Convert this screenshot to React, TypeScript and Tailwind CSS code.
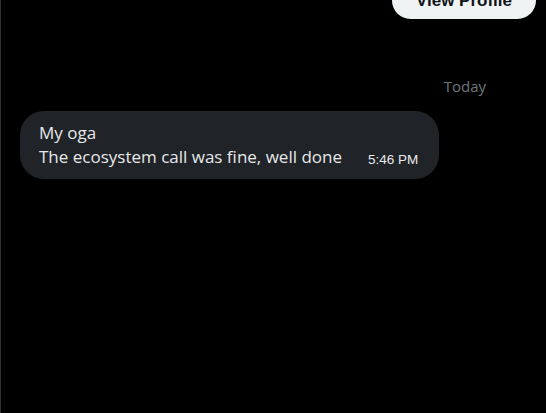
import React from 'react';

const App: React.FC = () => {
  return (
    <div className="h-[413px] w-[546px] overflow-hidden bg-black border-l border-[#2f3336] font-['Open_Sans',sans-serif] text-[#e7e9ea]">
      <div className="flex justify-end pr-[10px]">
        <button className="-mt-[18px] h-[37px] w-[144px] rounded-full bg-[#eff3f4] text-[17px] font-bold text-[#0f1419] font-['Liberation_Sans',sans-serif]">
          View Profile
        </button>
      </div>

      <div className="mt-[57px] flex justify-end pr-[60px]">
        <span className="text-[15px] leading-5 text-[#71767b]">Today</span>
      </div>

      <div className="mt-[15px] pl-[19px]">
        <div className="inline-flex items-end rounded-[24px] bg-[#202327] pl-[19px] pr-[21px] pt-[10px] pb-[10px]">
          <p className="text-[17px] leading-6">
            My oga
            <br />
            The ecosystem call was fine, well done
          </p>
          <span className="ml-[26px] mb-[1px] text-[13.5px] leading-4 text-[#e7e9ea] font-['Liberation_Sans',sans-serif]">5:46 PM</span>
        </div>
      </div>
    </div>
  );
};

export default App;
